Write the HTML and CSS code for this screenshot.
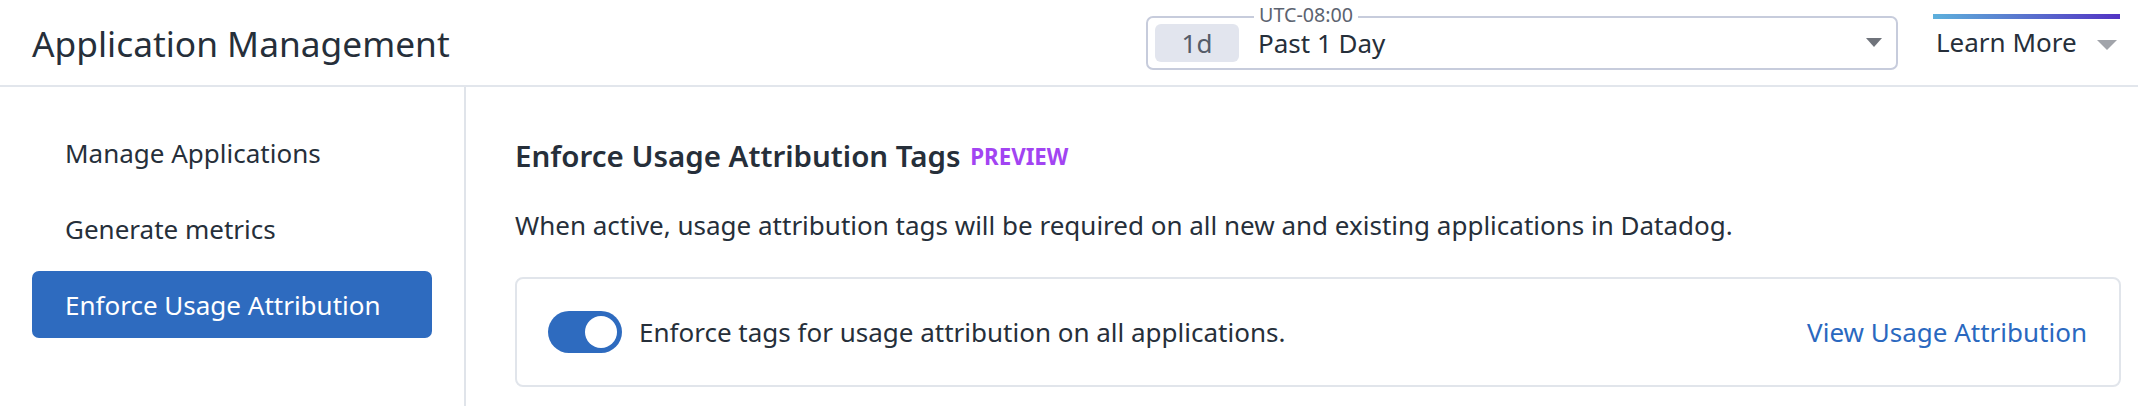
FILE: index.html
```html
<!DOCTYPE html>
<html lang="en">
<head>
<meta charset="utf-8">
<title>Application Management</title>
<link rel="stylesheet" href="styles.css">
</head>
<body>
<header class="topbar">
  <h1 class="title">Application Management</h1>
  <div class="picker">
    <span class="tz">UTC-08:00</span>
    <span class="badge">1d</span>
    <span class="range">Past 1 Day</span>
    <span class="caret caret-dark"></span>
  </div>
  <div class="learn">
    <div class="learn-bar"></div>
    <div class="learn-text">Learn More <span class="caret caret-light"></span></div>
  </div>
</header>
<div class="layout">
  <nav class="sidebar">
    <a class="nav-item">Manage Applications</a>
    <a class="nav-item">Generate metrics</a>
    <a class="nav-item active">Enforce Usage Attribution</a>
  </nav>
  <main class="content">
    <h2 class="heading">Enforce Usage Attribution Tags <span class="preview">PREVIEW</span></h2>
    <p class="desc">When active, usage attribution tags will be required on all new and existing applications in Datadog.</p>
    <div class="card">
      <div class="card-left">
        <span class="toggle"><span class="knob"></span></span>
        <span class="toggle-label">Enforce tags for usage attribution on all applications.</span>
      </div>
      <a class="link">View Usage Attribution</a>
    </div>
  </main>
</div>
</body>
</html>
```
FILE: styles.css
```css
* { box-sizing: border-box; }
html, body { margin: 0; padding: 0; background: #fff; }
body {
  font-family: "Noto Sans", "Open Sans", sans-serif;
  color: #262f3a;
  width: 2138px;
  height: 406px;
  overflow: hidden;
}
.topbar {
  display: flex;
  align-items: center;
  height: 87px;
  padding: 0 18px 0 32px;
  border-bottom: 2px solid #e2e6ec;
}
.title {
  flex: 1;
  margin: 0;
  font-size: 35.3px;
  font-weight: 400;
  line-height: 40px;
}
.picker {
  position: relative;
  width: 752px;
  height: 54px;
  border: 2px solid #c7ccdc;
  border-radius: 7px;
  display: flex;
  align-items: center;
  padding: 0 14px 0 7px;
}
.tz {
  position: absolute;
  top: -15px;
  left: 106px;
  padding: 0 5px;
  background: #fff;
  font-size: 19.7px;
  line-height: 24px;
  color: #5c6370;
}
.badge {
  width: 84px;
  height: 38px;
  border-radius: 6px;
  background: #e2e5ee;
  color: #555c69;
  font-size: 26px;
  line-height: 38px;
  text-align: center;
}
.range {
  flex: 1;
  margin-left: 19px;
  font-size: 26px;
  line-height: 36px;
}
.caret {
  display: inline-block;
  width: 0;
  height: 0;
  border-left: 8px solid transparent;
  border-right: 8px solid transparent;
  border-top: 9px solid #6f737b;
}
.caret-light {
  border-left-width: 10px;
  border-right-width: 10px;
  border-top: 10px solid #a1a4aa;
  margin-left: 14px;
  vertical-align: middle;
}
.learn {
  align-self: stretch;
  width: 187px;
  margin-left: 35px;
  padding-top: 14px;
  display: flex;
  flex-direction: column;
}
.learn-bar {
  height: 5px;
  background: linear-gradient(90deg, #5db0dc 0%, #5a7fd0 40%, #5233c4 100%);
}
.learn-text {
  margin-top: 6px;
  padding-left: 3px;
  font-size: 26px;
  line-height: 34px;
  white-space: nowrap;
}
.layout {
  display: flex;
  height: 319px;
}
.sidebar {
  width: 466px;
  border-right: 2px solid #e0e4ea;
  padding: 32px 32px 0 32px;
  display: flex;
  flex-direction: column;
  gap: 9px;
}
.nav-item {
  display: flex;
  align-items: center;
  height: 67px;
  padding-left: 33px;
  border-radius: 7px;
  font-size: 26px;
  color: #262f3a;
}
.nav-item.active {
  background: #2e6bbf;
  color: #fff;
}
.content {
  flex: 1;
  padding: 0 17px 0 49px;
}
.heading {
  margin: 49px 0 0;
  font-size: 29.5px;
  font-weight: 600;
  line-height: 40px;
}
.preview {
  margin-left: 2px;
  font-size: 22.3px;
  font-weight: 700;
  color: #a244f2;
  vertical-align: 2px;
}
.desc {
  margin: 30px 0 0;
  font-size: 26px;
  line-height: 36px;
}
.card {
  margin-top: 34px;
  height: 110px;
  border: 2px solid #e1e5eb;
  border-radius: 8px;
  display: flex;
  align-items: center;
  justify-content: space-between;
  padding: 0 32px 0 31px;
}
.card-left { display: flex; align-items: center; }
.toggle {
  position: relative;
  width: 74px;
  height: 42px;
  border-radius: 21px;
  background: #2e6bbf;
}
.knob {
  position: absolute;
  top: 5px;
  right: 5px;
  width: 32px;
  height: 32px;
  border-radius: 50%;
  background: #fff;
}
.toggle-label {
  margin-left: 17px;
  font-size: 26px;
  line-height: 36px;
}
.link {
  font-size: 26px;
  line-height: 36px;
  color: #2a68bf;
}
```
